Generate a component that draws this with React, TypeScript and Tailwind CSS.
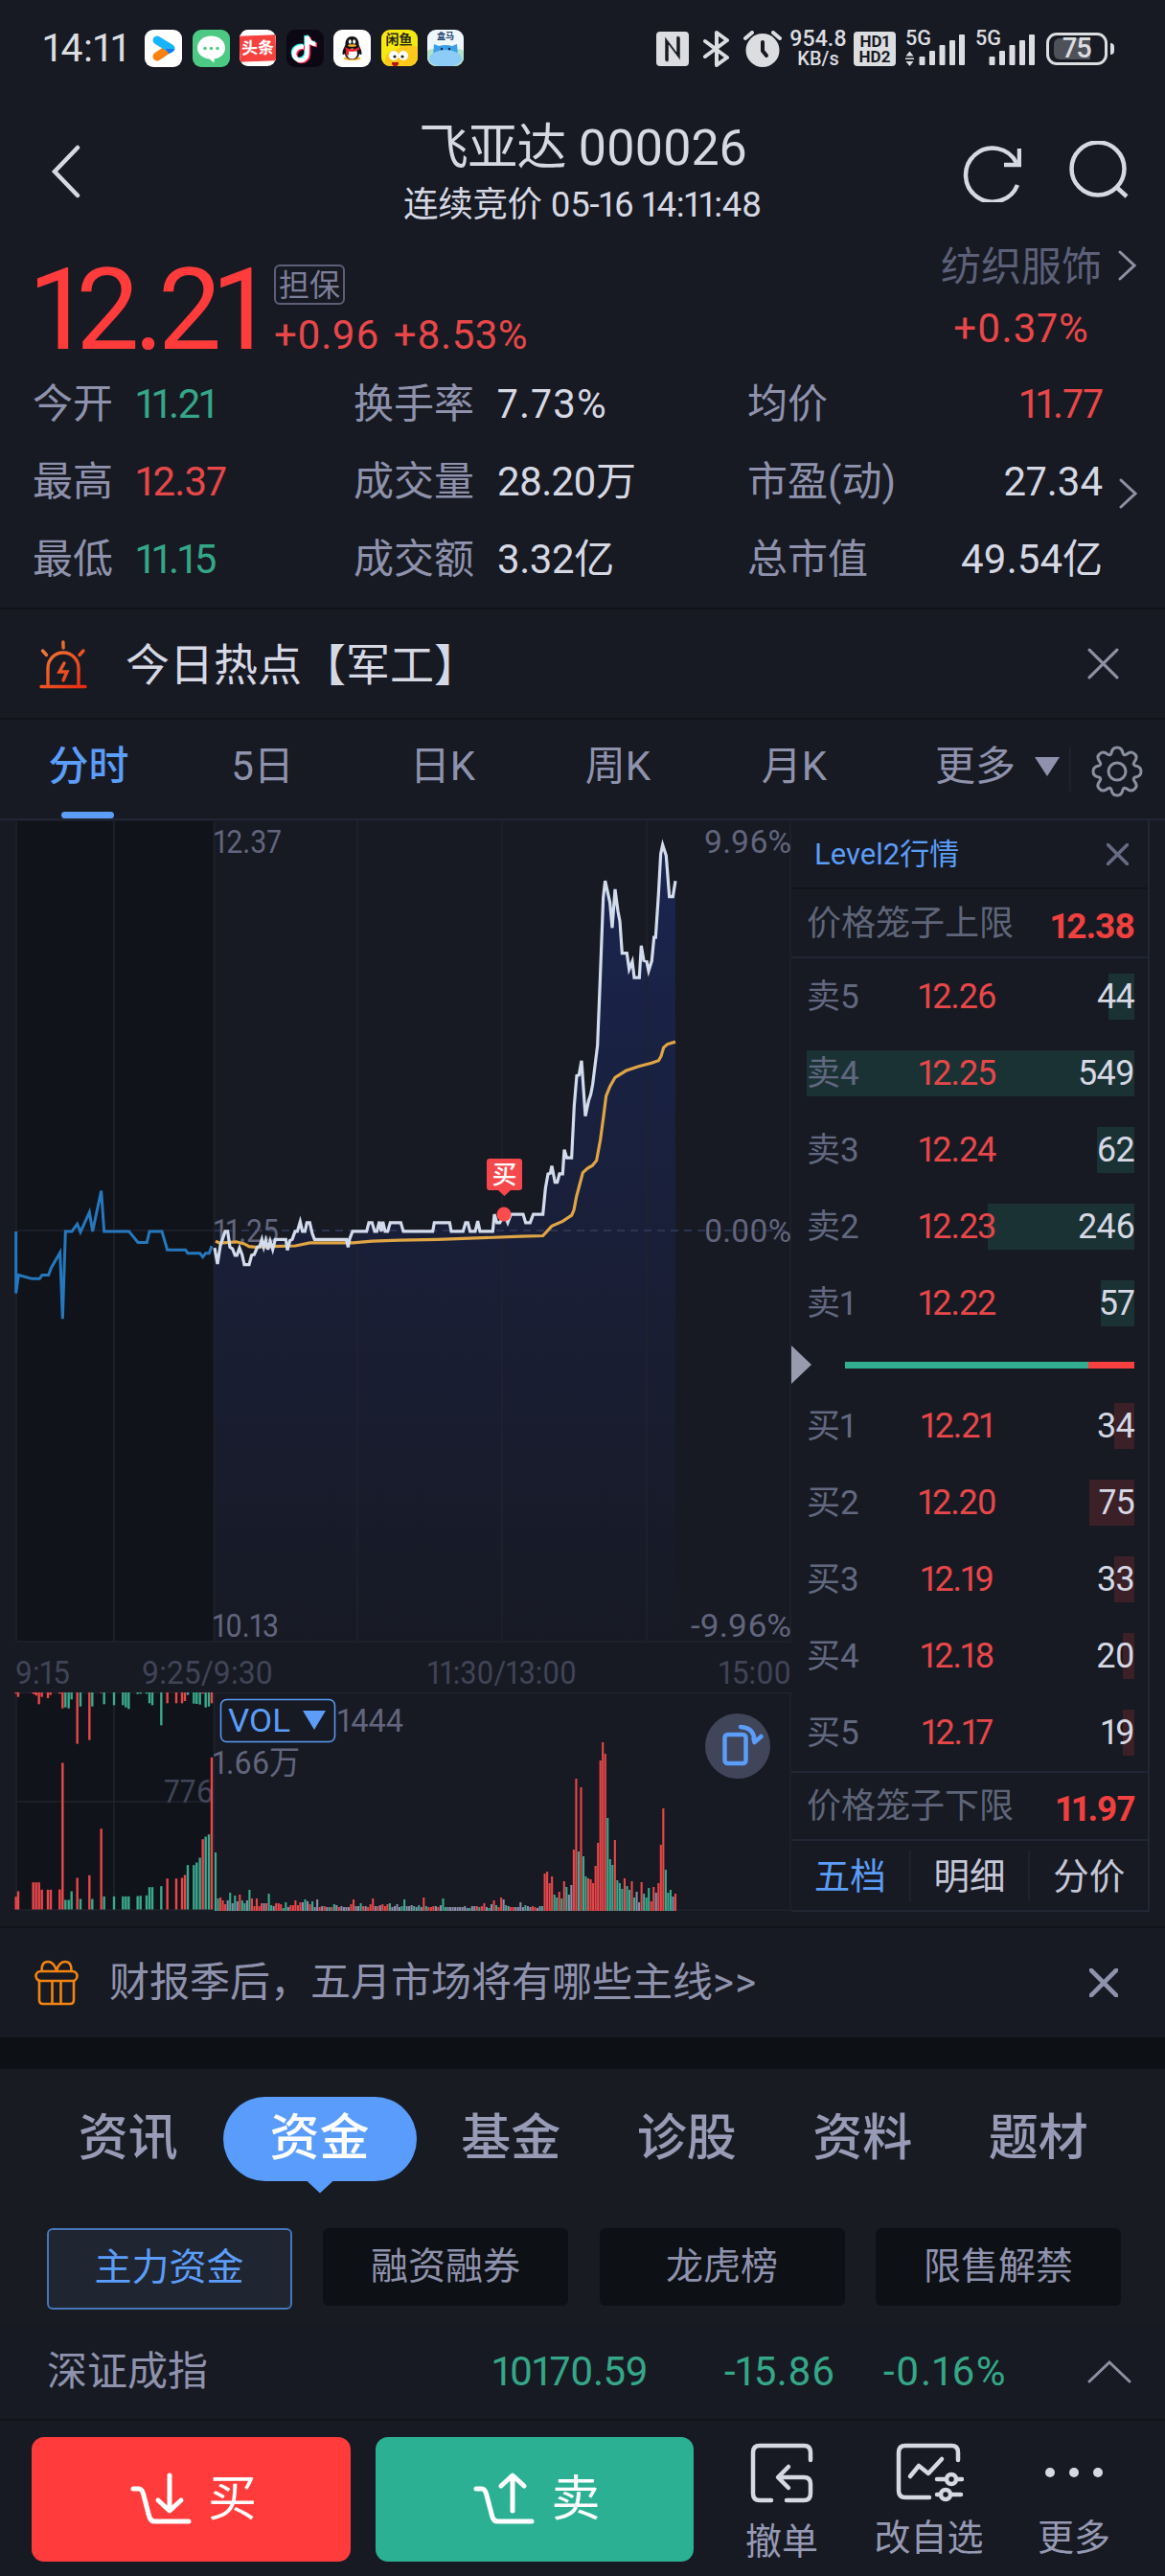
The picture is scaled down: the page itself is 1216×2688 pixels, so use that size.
import type { ReactNode } from 'react'
import clsx from 'clsx'

const UP = '#e8474a'
const DOWN = '#3aa98c'
const FLAT = '#8a8da6'

/* ---------- data ---------- */

interface Quote {
  label: string
  value: string
  tone: string
}

const quoteColumns: { className: string; labelClass: string; items: Quote[] }[] = [
  {
    className: 'w-[335px]',
    labelClass: 'w-[108px]',
    items: [
      { label: '今开', value: '11.21', tone: 'text-[#35a788] tracking-[-0.03em]' },
      { label: '最高', value: '12.37', tone: 'text-[#e8474a] tracking-[-0.02em]' },
      { label: '最低', value: '11.15', tone: 'text-[#35a788] tracking-[-0.03em]' }
    ]
  },
  {
    className: 'w-[411px]',
    labelClass: 'w-[150px]',
    items: [
      { label: '换手率', value: '7.73%', tone: 'text-[#d6d8e4] tracking-[0.03em]' },
      { label: '成交量', value: '28.20万', tone: 'text-[#d6d8e4] tracking-[-0.02em]' },
      { label: '成交额', value: '3.32亿', tone: 'text-[#d6d8e4] tracking-[-0.01em]' }
    ]
  },
  {
    className: 'w-[371px]',
    labelClass: 'flex-1',
    items: [
      { label: '均价', value: '11.77', tone: 'text-[#e8474a] tracking-[-0.02em]' },
      { label: '市盈(动)', value: '27.34', tone: 'text-[#d6d8e4]' },
      { label: '总市值', value: '49.54亿', tone: 'text-[#d6d8e4]' }
    ]
  }
]

interface Level {
  label: string
  price: string
  volume: number
}

const asks: Level[] = [
  { label: '卖5', price: '12.26', volume: 44 },
  { label: '卖4', price: '12.25', volume: 549 },
  { label: '卖3', price: '12.24', volume: 62 },
  { label: '卖2', price: '12.23', volume: 246 },
  { label: '卖1', price: '12.22', volume: 57 }
]

const bids: Level[] = [
  { label: '买1', price: '12.21', volume: 34 },
  { label: '买2', price: '12.20', volume: 75 },
  { label: '买3', price: '12.19', volume: 33 },
  { label: '买4', price: '12.18', volume: 20 },
  { label: '买5', price: '12.17', volume: 19 }
]

const MAX_VOLUME = 549

// Price series, on a grid of 1/3 px horizontally and 0.3507 px vertically
const auctionLine =
  '50,1243 50,1427 58,1373 100,1384 124,1384 132,1373 152,1373 160,1352 188,1306 196,1503 205,1243 225,1243 242,1221 252,1245 280,1186 290,1243 317,1122 326,1243 404,1243 432,1276 460,1276 468,1243 507,1243 524,1298 581,1298 588,1308 626,1308 635,1319 644,1308 655,1308 663,1287'

const priceLine =
  '672,1292 681,1340 690,1285 705,1243 713,1243 720,1290 728,1295 736,1314 742,1314 750,1292 758,1312 765,1342 780,1342 788,1314 796,1312 806,1290 813,1288 820,1267 826,1290 832,1270 839,1297 846,1272 854,1297 862,1267 895,1267 900,1299 908,1270 915,1267 924,1243 931,1243 940,1214 947,1243 955,1243 961,1217 970,1217 978,1250 985,1267 1085,1267 1090,1290 1095,1265 1104,1243 1148,1243 1155,1217 1165,1217 1173,1243 1180,1243 1188,1214 1194,1243 1199,1214 1206,1243 1214,1243 1222,1217 1255,1217 1263,1243 1355,1243 1360,1217 1408,1217 1413,1243 1450,1243 1458,1217 1465,1217 1472,1243 1488,1243 1496,1212 1503,1243 1543,1243 1548,1192 1556,1217 1565,1217 1580,1192 1590,1217 1600,1192 1638,1192 1646,1217 1660,1217 1670,1192 1700,1192 1708,1115 1716,1072 1723,1070 1728,1048 1738,1097 1745,1097 1752,1072 1762,1072 1767,1000 1775,1024 1790,1024 1798,870 1806,780 1813,778 1821,735 1833,900 1843,855 1850,835 1856,805 1871,690 1879,500 1889,250 1895,200 1910,265 1917,340 1926,225 1935,290 1941,320 1948,415 1963,415 1970,463 1980,440 1986,488 2002,488 2008,393 2016,437 2025,440 2031,468 2041,438 2048,368 2053,368 2062,240 2069,120 2075,93 2086,125 2096,247 2107,247 2115,200'

const averageLine =
  '675,1272 688,1278 740,1274 765,1280 780,1288 800,1290 850,1288 925,1286 970,1277 1105,1277 1165,1272 1250,1269 1370,1267 1490,1263 1630,1258 1700,1256 1728,1227 1762,1213 1790,1195 1797,1180 1805,1140 1825,1068 1840,1055 1855,1047 1868,1032 1880,970 1890,900 1898,840 1910,812 1926,785 1960,765 2000,752 2040,742 2062,735 2070,722 2078,696 2090,686 2115,679'

// Unmatched auction volume, hanging from the top: "x colour height" in thirds of a pixel
const auctionTop =
  '50r4 57r14 104r4 109r6 114r10 122r37 131r14 150r18 158r8 187r4 196r50 205g47 215g50 224g22 242r161 252g44 280r149 289g44 317r2 326g37 357g40 385g40 394g47 403g52 431g5 440g4 459g4 468g34 477g40 505g103 524r34 552r34 570r34 579r27 588g8 607g35 616g36 626g38 635r4 644g47 654g44 663r34'

const auctionBottom =
  '50r40 57r57 104r85 113r85 122r85 131r62 150r62 159r62 187r63 196r459 205g30 215g30 224g57 242r99 252g33 280r107 289g33 317r253 326g41 357g41 385g41 394g41 403g41 431g42 440g43 459g44 468g70 477g70 505g73 524r97 552r97 570r99 579r108 588g139 607g139 616g147 626g162 635r220 644g228 654g235 663r476'

// One minute bars: colour + height in px
const minuteBars =
  'g61 g13 r14 r11 r7 w11 g19 w8 g16 w10 r17 g11 g8 w11 g22 r13 r5 r13 r5 r8 w8 r8 g18 g6 w5 r8 r8 r7 g3 g9 w4 r6 r6 r11 r6 r9 w9 g12 w10 r7 g10 w4 w12 r4 w5 r5 w4 g4 r4 g7 w6 r4 w5 w4 w4 w4 r7 r12 w5 w5 g8 r5 w5 r4 r7 r13 w5 r5 w6 r7 r5 r7 g8 w4 w5 w7 w4 g5 g12 w5 w5 w6 g5 w4 g6 w4 r14 g5 r4 r4 r5 w5 r4 w6 g13 g4 w4 w4 w4 w4 w4 w4 w4 w5 w3 g3 w5 w5 r5 g4 r5 r8 w4 g3 w7 r11 g6 r4 r14 w12 g6 w5 r4 r4 w4 w4 w9 w4 g6 w5 w4 r5 r4 w3 w5 g5 r39 r41 r29 r36 g17 g14 r20 g13 r31 g25 w17 w27 r64 r138 g62 r129 g57 g36 r34 r33 r29 r47 r71 r157 r176 r164 g97 g54 g48 r74 g32 g29 g23 r34 g26 g22 r31 g14 w20 w9 r30 g18 g14 g24 r10 r25 w19 r29 r69 r107 g43 g19 g22 w15 r18'

const barColors: Record<string, string> = { r: UP, g: DOWN, w: FLAT }

/* ---------- small pieces ---------- */

function Chevron({ className }: { className?: string }) {
  return (
    <svg viewBox="0 0 19 32" className={clsx('h-8 w-[19px]', className)} fill="none" stroke="#8f91a2" strokeWidth="3" strokeLinecap="round">
      <path d="M2 2l15 14L2 30" />
    </svg>
  )
}

function CloseIcon({ className, strokeWidth = 3 }: { className: string; strokeWidth?: number }) {
  return (
    <svg viewBox="0 0 32 32" className={className} fill="none" stroke="currentColor" strokeWidth={strokeWidth} strokeLinecap="round">
      <path d="M2 2l28 28M30 2L2 30" />
    </svg>
  )
}

function Signal({ data }: { data?: boolean }) {
  return (
    <svg viewBox="0 0 62 42" className="h-[42px] w-[62px] overflow-visible" fill="#dcdde0">
      <text x="0" y="17" fontSize="22" fontWeight="500" fontFamily="Roboto, sans-serif" textLength="27" lengthAdjust="spacingAndGlyphs">
        5G
      </text>
      {data && <path d="M0.500 28.500l4-5 4 5zM0.500 34l4 5 4-5zM0 30.500h9v1.500h-9z" />}
      <rect x="14.500" y="29" width="6" height="9" rx="1" />
      <rect x="25" y="23" width="6" height="15" rx="1" />
      <rect x="35.500" y="17" width="6" height="21" rx="1" />
      <rect x="46" y="12" width="6" height="26" rx="1" />
      <rect x="56" y="6" width="6" height="32" rx="1" />
    </svg>
  )
}

function AppIcons() {
  return (
    <div className="flex gap-[10.500px]">
      <svg viewBox="0 0 39 39" className="size-[39px]">
        <rect width="39" height="39" rx="9" fill="#fff" />
        <path d="M13 28l12-8" stroke="#fb8110" strokeWidth="9" strokeLinecap="round" />
        <path d="M13 11l14 8.500" stroke="#18b4fb" strokeWidth="9" strokeLinecap="round" />
        <path d="M22 20h9c-1 3-3 4-6 5z" fill="#1277f0" />
      </svg>
      <svg viewBox="0 0 39 39" className="size-[39px]">
        <rect width="39" height="39" rx="9" fill="#4cc982" />
        <path d="M19.500 6.500c8.500 0 14.500 5.500 14.500 12.500 0 6-4.500 10.500-11.500 11.500v4l-5-4C10 29.500 5 25 5 19 5 12 11 6.500 19.500 6.500z" fill="#fff" />
        <g fill="#4cc982">
          <circle cx="13" cy="19.500" r="1.700" />
          <circle cx="19.500" cy="19.500" r="1.700" />
          <circle cx="26" cy="19.500" r="1.700" />
        </g>
      </svg>
      <div className="flex size-[38px] items-center justify-center overflow-hidden rounded-[9px] bg-white">
        <span className="flex h-[27px] w-full shrink-0 -rotate-2 items-center justify-center bg-[#f5423f] text-[17px] leading-none font-bold text-white">
          头条
        </span>
      </div>
      <svg viewBox="0 0 39 39" className="size-[39px]">
        <rect width="39" height="39" rx="9" fill="#0b0813" />
        <g fill="none" strokeWidth="4.500">
          <path d="M18 18c-6-1-10 3-10 7s3 7 6.500 7 7-3 7-7V7c1 4 4 8 9 8" stroke="#25f4ee" transform="translate(-1 -1)" />
          <path d="M18 18c-6-1-10 3-10 7s3 7 6.500 7 7-3 7-7V7c1 4 4 8 9 8" stroke="#fe2c55" transform="translate(1.500 1)" />
          <path d="M18 18c-6-1-10 3-10 7s3 7 6.500 7 7-3 7-7V7c1 4 4 8 9 8" stroke="#fff" />
        </g>
      </svg>
      <svg viewBox="0 0 39 39" className="size-[39px]">
        <rect width="39" height="39" rx="9" fill="#fff" />
        <ellipse cx="19.500" cy="30" rx="9" ry="2" fill="#f6b22c" />
        <path d="M19.500 7c4.500 0 7 3.500 7 8 0 2 3 5.500 3 9.500 0 2-1 2-2.500.5-.5 4-3.500 6-7.500 6s-7-2-7.500-6C10.500 26.500 9.500 26.500 9.500 24.500c0-4 3-7.500 3-9.500 0-4.500 2.500-8 7-8z" fill="#111" />
        <ellipse cx="19.500" cy="25" rx="5.500" ry="5.500" fill="#fff" />
        <path d="M12 18c5 3 10 3 15 0v3c-5 2-8 2-11 1.500v4h-3v-5z" fill="#e8202a" />
        <ellipse cx="17.300" cy="12.500" rx="1.500" ry="2.200" fill="#fff" />
        <ellipse cx="21.700" cy="12.500" rx="1.500" ry="2.200" fill="#fff" />
        <ellipse cx="19.500" cy="16.500" rx="4.500" ry="1.300" fill="#f6b22c" />
      </svg>
      <div className="relative flex size-[38px] justify-center overflow-hidden rounded-[9px] bg-[#f6e813]">
        <span className="pt-[3px] text-[14px] leading-none font-bold text-[#2b2a10]">闲鱼</span>
        <svg viewBox="0 0 38 38" className="absolute inset-0 size-[38px]">
          <path d="M4 38c-2-10 3-17 12-17 5-6 17-4 22-3v20z" fill="#fdc91b" />
          <circle cx="13" cy="27" r="5" fill="#fff" />
          <circle cx="23" cy="27" r="5" fill="#fff" />
          <circle cx="14" cy="28" r="1.600" fill="#222" />
          <circle cx="22" cy="28" r="1.600" fill="#222" />
          <path d="M11 34h7c0 3-1 4-3.500 4S11 37 11 34z" fill="#b3121d" />
        </svg>
      </div>
      <div className="relative flex size-[38px] justify-center overflow-hidden rounded-[9px] bg-[#eef7fb]">
        <span className="pt-[3px] text-[9px] leading-none font-bold text-[#20406b]">盒马</span>
        <svg viewBox="0 0 38 38" className="absolute inset-0 size-[38px]">
          <path d="M0 22q6-4 10 0v16H0zM38 22q-6-4-10 0v16h10z" fill="#b4e3c9" />
          <path d="M7 15l5 2q7-2 14 0l5-2 1 12H6z" fill="#3c9fe8" />
          <ellipse cx="19" cy="30" rx="17" ry="9" fill="#8cccf6" />
          <circle cx="15" cy="20" r="1.200" fill="#123" />
          <circle cx="23" cy="20" r="1.200" fill="#123" />
        </svg>
      </div>
    </div>
  )
}

function StatusBar() {
  return (
    <div className="flex h-[100px] items-center pt-[1px] pl-[45px] text-[#dcdde0]">
      <span className="w-[106px] text-[41px] leading-none tracking-[0.015em]">14:11</span>
      <AppIcons />
      <div className="ml-auto flex items-center pr-[53px]">
        <svg viewBox="0 0 34 36" className="h-9 w-[34px]">
          <rect width="34" height="36" rx="4" fill="#dcdde0" />
          <path d="M9 5v25q3 3 4 0V14l12 16V6q-3-3-4 0v15z" fill="#171a22" stroke="#dcdde0" strokeWidth="0.500" />
        </svg>
        <svg viewBox="0 0 30 38" className="ml-[14px] h-[38px] w-[30px]" fill="none" stroke="#dcdde0" strokeWidth="4" strokeLinejoin="round" strokeLinecap="round">
          <path d="M3 11l23 17-11 8V2l11 8L3 27" />
        </svg>
        <svg viewBox="0 0 40 38" className="ml-[13px] h-[38px] w-10" stroke="#dcdde0" strokeLinecap="round">
          <circle cx="20" cy="20.500" r="17.500" fill="#dcdde0" stroke="none" />
          <path d="M2 8l7-6M38 8l-7-6" strokeWidth="4" />
          <path d="M20 12v9l4 5" fill="none" stroke="#171a22" strokeWidth="4" />
        </svg>
        <div className="ml-2 flex w-[60px] flex-col items-center text-[23px] leading-[20px] font-medium">
          <span>954.8</span>
          <span className="text-[20px]">KB/s</span>
        </div>
        <div className="ml-[7px] flex h-9 w-11 flex-col items-center justify-center rounded-[4px] bg-[#dcdde0] text-[17px] leading-4 font-bold text-[#171a22]">
          <span>HD1</span>
          <span>HD2</span>
        </div>
        <div className="ml-[10px] flex gap-[11px]">
          <Signal data />
          <Signal />
        </div>
        <div className="ml-[12px] flex h-[34px] w-16 items-center justify-center rounded-[11px] border-[3px] border-[#dcdde0]">
          <span className="flex h-[22px] w-[48px] items-center rounded-[6px] bg-linear-to-r from-[#4f5159] from-80% to-transparent to-80% pl-[9px] text-[29px] leading-none font-medium tracking-[-0.03em]">
            75
          </span>
        </div>
        <div className="ml-[3px] h-3 w-1 rounded-r bg-[#dcdde0]" />
      </div>
    </div>
  )
}

function Header() {
  return (
    <div className="flex h-[152px] items-start px-[36px] text-[#d6d8e4]">
      <div className="flex w-[200px] pt-[51px] pl-[17px]">
        <svg viewBox="0 0 32 56" className="h-14 w-8" fill="none" stroke="currentColor" strokeWidth="4.500" strokeLinecap="round">
          <path d="M28 3L4 28l24 25" />
        </svg>
      </div>
      <div className="flex flex-1 flex-col items-center pt-[28px]">
        <h1 className="text-[52px] leading-[54px] tracking-[-0.013em]">飞亚达 000026</h1>
        <p className="mt-[13px] text-[36.500px] leading-[38px] tracking-[-0.009em]">连续竞价 05-16 14:11:48</p>
      </div>
      <div className="flex w-[200px] justify-end gap-[50px] pt-[47px] pr-[2px]">
        <svg viewBox="0 0 62 64" className="h-16 w-[62px]" fill="none" stroke="currentColor" strokeWidth="4.500">
          <path d="M58 46A28 28 0 1 1 57 23" />
          <path d="M60 8v17H44" />
        </svg>
        <svg viewBox="0 0 62 64" className="h-16 w-[62px]" fill="none" stroke="currentColor" strokeWidth="4.500">
          <circle cx="30" cy="29" r="27.500" />
          <path d="M49 48l11 10" />
        </svg>
      </div>
    </div>
  )
}

function PriceSummary() {
  return (
    <div className="flex h-[128px] items-start pl-[34px]">
      <div className="w-[252px] pt-[17px] text-[118px] leading-[110px] tracking-[-0.050em] text-[#ff3b3b]">12.21</div>
      <div className="pt-[24px]">
        <div className="flex h-[42px] w-[74px] items-center justify-center rounded-[6px] border-2 border-[#5d5f78] pt-px text-[32px] leading-none text-[#7d7f99]">
          担保
        </div>
        <div className="mt-[11px] text-[42px] leading-[42px] tracking-[0.012em] text-[#e8474a] [word-spacing:4px]">+0.96 +8.53%</div>
      </div>
      <div className="ml-auto flex items-start">
        <div className="flex w-[170px] flex-col items-center pt-[6px] text-[42px] leading-[42px]">
          <span className="text-[#5c6079]">纺织服饰</span>
          <span className="mt-[22px] tracking-[0.025em] text-[#e8474a]">+0.37%</span>
        </div>
        <Chevron className="mt-[9px] mr-[30px] ml-4" />
      </div>
    </div>
  )
}

function QuoteGrid() {
  return (
    <div className="flex h-[256px] border-b-2 border-[#10131a] pl-[34px] text-[42px] leading-none">
      {quoteColumns.map((col) => (
        <div key={col.className} className={clsx('flex flex-col pt-[1.500px]', col.className)}>
          {col.items.map((q) => (
            <div key={q.label} className="flex h-[81px] items-center">
              <span className={clsx('text-[#8f92ad]', col.labelClass)}>{q.label}</span>
              <span className={q.tone}>{q.value}</span>
            </div>
          ))}
        </div>
      ))}
      <Chevron className="mt-[119px] ml-[17px]" />
    </div>
  )
}

function HotTopic() {
  return (
    <div className="flex h-[115px] items-center border-b-2 border-[#10131a] pr-12 pl-[41px]">
      <svg viewBox="0 0 50 52" className="h-[52px] w-[50px]" fill="none" stroke="url(#alarm)" strokeWidth="3.400" strokeLinecap="round">
        <defs>
          <linearGradient id="alarm" gradientUnits="userSpaceOnUse" x1="0" y1="0" x2="50" y2="52">
            <stop offset="0" stopColor="#f08a3c" />
            <stop offset="1" stopColor="#e9260f" />
          </linearGradient>
        </defs>
        <path d="M2 49.500h46M9 49V30a16 16 0 0 1 32 0v19M24.900 3l.2 6M3.500 12l4 4.500M46 12l-4 4.500M26 25l-5 9h8l-4 9" />
      </svg>
      <span className="ml-[40px] pt-[2px] text-[46px] leading-none text-[#d6d8e4]">今日热点【军工】</span>
      <CloseIcon className="ml-auto size-[33px] text-[#8f91a2]" />
    </div>
  )
}

function PeriodTabs() {
  return (
    <div className="flex h-[105px] border-b-2 border-[#222533] text-[42px] leading-none text-[#8f92ad]">
      <div className="relative flex w-[185px] items-center justify-center pb-[6px] font-medium text-[#5b9df8]">
        分时
        <span className="absolute bottom-0 left-16 h-[7px] w-[55px] rounded bg-[#5b9df8]" />
      </div>
      <div className="flex w-[178px] items-center justify-center pb-[6px]">5日</div>
      <div className="flex w-[198px] items-center justify-center pb-[6px]">日K</div>
      <div className="flex w-[168px] items-center justify-center pb-[6px]">周K</div>
      <div className="flex w-[200px] items-center justify-center pb-[6px]">月K</div>
      <div className="flex flex-1 items-center pb-[6px] pl-[47px]">
        更多
        <svg viewBox="0 0 26 20" className="ml-[20px] h-5 w-[26px]" fill="#8f92ad">
          <path d="M0 0h26L13 20z" />
        </svg>
      </div>
      <div className="mt-[29px] mb-[28px] w-[100px] border-l-2 border-[#1f222d] pl-[21px]">
        <svg viewBox="0 0 54 54" className="-mt-[2px] size-[54px]" fill="none" stroke="#8b90a0" strokeWidth="3" strokeLinejoin="round">
          <path d="M21 8Q22 2 27 2Q32 2 33 8Q34 11 37 9Q42 5 45.500 9Q49 12 45 17Q43 20 46 21Q52 22 52 27Q52 32 46 33Q43 34 45 37Q49 42 45.500 45Q42 49 37 45Q34 43 33 46Q32 52 27 52Q22 52 21 46Q20 43 17 45Q12 49 8.500 45Q5 42 9 37Q11 34 8 33Q2 32 2 27Q2 22 8 21Q11 20 9 17Q5 12 8.500 9Q12 5 17 9Q20 11 21 8z" />
          <circle cx="27" cy="27" r="9" />
        </svg>
      </div>
    </div>
  )
}

/* ---------- chart ---------- */

function ChartText({ x, y, width, fill = '#62657d', children }: { x: number; y: number; width: number; fill?: string; children: ReactNode }) {
  return (
    <text x={x} y={y} fill={fill} fontSize="34" textLength={width} lengthAdjust="spacingAndGlyphs">
      {children}
    </text>
  )
}

function parseBars(source: string) {
  return source.split(' ').map((s) => {
    const at = s.search(/[rgw]/)
    return { x: Number(s.slice(0, at)), color: barColors[s[at]], h: Number(s.slice(at + 1)) }
  })
}

function MinuteChart() {
  return (
    <svg viewBox="0 857 826 1139" className="h-[1139px] w-[826px] shrink-0 overflow-visible" fontFamily='Roboto, "Noto Sans CJK SC", sans-serif'>
      <defs>
        <linearGradient id="area" gradientUnits="userSpaceOnUse" x1="0" y1="60" x2="0" y2="2460">
          <stop offset="0" stopColor="#1a2550" />
          <stop offset="0.500" stopColor="#191f38" />
          <stop offset="1" stopColor="#171a24" />
        </linearGradient>
      </defs>
      <rect x="17" y="858" width="206" height="856" fill="#10131a" />
      <rect x="17" y="1767" width="206" height="228" fill="#10131a" />

      <g transform="translate(0 850) scale(0.33333 0.3507)">
        <polygon points={`672,2462 ${priceLine} 2115,2462`} fill="url(#area)" />
      </g>

      {/* grid */}
      <g stroke="#20232e" strokeWidth="1.500">
        <path d="M17 858V1714M119 858V1714M223.500 858V1714M373 858V1714M524 858V1714M675 858V1714M825 858V1714" />
        <path d="M17 1714H826M17 1285H223M223 1767.500H826M17 1767.500H223M825 1767V1994M17 1994H826" />
        <path d="M17 1767V1994M119 1767V1994M223.500 1767V1994M17 1881H223" />
      </g>
      <path d="M224 1285H825" stroke="#2b3452" strokeWidth="2" strokeDasharray="8 6" />

      <g>
        <ChartText x={223} y={891} width={71}>12.37</ChartText>
        <ChartText x={223} y={1297} width={68}>11.25</ChartText>
        <ChartText x={222} y={1709} width={69}>10.13</ChartText>
        <ChartText x={735} y={891} width={91}>9.96%</ChartText>
        <ChartText x={735} y={1297} width={91}>0.00%</ChartText>
        <ChartText x={721} y={1709} width={105}>-9.96%</ChartText>
      </g>

      <g transform="translate(0 850) scale(0.33333 0.3507)" fill="none">
        <polyline points={auctionLine} stroke="#2678be" strokeWidth="3" vectorEffect="non-scaling-stroke" />
        <polyline points={averageLine} stroke="#e0a545" strokeWidth="3.200" vectorEffect="non-scaling-stroke" />
        <polyline points={priceLine} stroke="#d3dcec" strokeWidth="3.200" vectorEffect="non-scaling-stroke" />
      </g>

      {/* trade marker */}
      <path d="M511 1210h31q3 0 3 3v27q0 3-3 3h-9l-6.500 6-6.500-6h-9q-3 0-3-3v-27q0-3 3-3z" fill="#f5484c" />
      <text x="513.500" y="1236" fontSize="26" fill="#fff" fontWeight="500">
        买
      </text>
      <circle cx="526" cy="1268" r="7.500" fill="#ff4a4e" />

      <g>
        <ChartText x={16} y={1758} width={57} fill="#414457">9:15</ChartText>
        <ChartText x={148} y={1758} width={137} fill="#414457">9:25/9:30</ChartText>
        <ChartText x={446} y={1758} width={156} fill="#414457">11:30/13:00</ChartText>
        <ChartText x={750} y={1758} width={76} fill="#414457">15:00</ChartText>
      </g>

      {/* volume */}
      <ChartText x={171} y={1882} width={52} fill="#414457">776</ChartText>
      {parseBars(auctionTop).map((b) => (
        <rect key={`t${b.x}`} x={b.x / 3 - 1.200} y={1767} width={2.400} height={b.h / 3} fill={b.color} />
      ))}
      {parseBars(auctionBottom).map((b) => (
        <rect key={`b${b.x}`} x={b.x / 3 - 1.200} y={1993.500 - b.h / 3} width={2.400} height={b.h / 3} fill={b.color} />
      ))}
      {parseBars(minuteBars).map((b, i) => (
        <rect key={i} x={224 + i * 2.526} y={1995 - b.h} width={2.100} height={b.h} fill={b.color} />
      ))}

      <rect x="230.500" y="1774.500" width="119" height="44" rx="6" fill="#171a22" stroke="#5b9df8" strokeWidth="1.500" />
      <text x="238" y="1808" fontSize="34" fill="#5b9df8" textLength="65" lengthAdjust="spacingAndGlyphs">
        VOL
      </text>
      <path d="M316 1786h24l-12 20z" fill="#5b9df8" />
      <ChartText x={352} y={1808} width={69}>1444</ChartText>
      <ChartText x={222} y={1852} width={91}>1.66万</ChartText>

      {/* rotate to landscape */}
      <circle cx="770" cy="1823" r="34" fill="#414559" />
      <g fill="none" stroke="#5b9df8" strokeWidth="4.500" strokeLinecap="round" strokeLinejoin="round">
        <rect x="756.500" y="1811" width="22" height="30" rx="3" />
        <path d="M773 1803q15 1 14.500 16M787.500 1819l-1-4M787.500 1819l7-6" />
      </g>
    </svg>
  )
}

/* ---------- order book ---------- */

function LevelRow({ level, side }: { level: Level; side: 'ask' | 'bid' }) {
  return (
    <div className="relative mr-[14px] ml-4 flex h-20 items-center text-[36px] leading-none">
      <div
        className={clsx('absolute top-4 right-0 h-12', side === 'ask' ? 'bg-[#1b3235]' : 'bg-[#3b2028]')}
        style={{ width: `${(level.volume / MAX_VOLUME) * 100}%` }}
      />
      <span className="relative w-[109px] text-[35px] text-[#626880]">{level.label}</span>
      <span className="relative w-[96px] text-center tracking-[-0.030em] text-[#e8474a]">{level.price}</span>
      <span className="relative flex-1 text-right tracking-[-0.020em] text-[#d6d8e4]">{level.volume}</span>
    </div>
  )
}

function OrderBook() {
  return (
    <div className="flex w-[374px] flex-col border-r-2 border-b-2 border-[#222533]">
      <div className="flex h-[72px] items-center border-b-2 border-[#10131a] pt-px pr-5 pl-[24px] text-[31px] leading-none text-[#5b9df8]">
        Level2行情
        <CloseIcon className="ml-auto size-[23px] text-[#666a83]" strokeWidth={5} />
      </div>
      <div className="flex h-[72px] items-center border-b-2 border-[#222533] pt-px pr-[14px] pl-4 text-[36px] leading-none">
        <span className="text-[#5f6579]">价格笼子上限</span>
        <span className="ml-auto pt-[6px] text-[37px] font-bold tracking-[-0.030em] text-[#f0403f]">12.38</span>
      </div>
      {asks.map((l) => (
        <LevelRow key={l.label} level={l} side="ask" />
      ))}
      <div className="flex h-12 items-center">
        <svg viewBox="0 0 21 40" className="h-10 w-[21px]" fill="#979bad">
          <path d="M0 0l21 20L0 40z" />
        </svg>
        <div className="ml-[35px] h-[7px] w-[254px] bg-[#32ad92]" />
        <div className="h-[7px] w-[48px] bg-[#f7403f]" />
      </div>
      {bids.map((l) => (
        <LevelRow key={l.label} level={l} side="bid" />
      ))}
      <div className="flex h-[73px] items-center border-y-2 border-[#222533] pr-[14px] pl-4 text-[36px] leading-none">
        <span className="text-[#5f6579]">价格笼子下限</span>
        <span className="ml-auto pt-[5px] text-[37px] font-bold tracking-[-0.030em] text-[#f0403f]">11.97</span>
      </div>
      <div className="flex flex-1 items-center text-[37.500px] leading-none text-[#c5c7d9]">
        <span className="flex h-[53px] flex-1 items-center justify-center pt-[3px] text-[#5b9df8]">五档</span>
        <span className="flex h-[53px] flex-1 items-center justify-center border-x-2 border-[#1f222d] pt-[3px]">明细</span>
        <span className="flex h-[53px] flex-1 items-center justify-center pt-[3px]">分价</span>
      </div>
    </div>
  )
}

/* ---------- lower part ---------- */

function Notice() {
  return (
    <div className="mt-[15px] flex h-[116px] items-center border-t-2 border-[#10131a] pr-[49px] pl-9">
      <svg viewBox="0 0 46 48" className="h-12 w-[46px]" fill="none" stroke="#f28414" strokeWidth="2.600" strokeLinejoin="round">
        <rect x="1.500" y="12" width="43" height="10" rx="5" />
        <path d="M5 22v20q0 4 4 4h28q4 0 4-4V22M18.500 22v24M27.500 22v24" />
        <path d="M7.500 12Q7 2 14 2q6 0 9 9 3-9 9-9 7 0 6.500 10" />
      </svg>
      <span className="ml-[32px] text-[42px] leading-none text-[#8f92ad]">
        财报季后，五月市场将有哪些主线<span className="tracking-[0.030em]">&gt;&gt;</span>
      </span>
      <CloseIcon className="ml-auto size-[30px] text-[#8f92ad]" strokeWidth={5} />
    </div>
  )
}

const sections = ['资讯', '资金', '基金', '诊股', '资料', '题材']
const subSections = ['主力资金', '融资融券', '龙虎榜', '限售解禁']

function Sections() {
  return (
    <div className="h-[300px] border-t-[33px] border-[#0d1014] bg-[#181b22]">
      <div className="flex pt-[29px] pl-[42px] text-[52px] leading-none font-medium text-[#989bb5]">
        {sections.map((name) =>
          name === '资金' ? (
            <div key={name} className="relative mx-[7px] flex h-[88px] w-[202px] items-center justify-center rounded-full bg-[#599cfb] text-white">
              {name}
              <svg viewBox="0 0 28 13" className="absolute top-[87px] left-[87px] h-[14px] w-7" fill="#599cfb">
                <path d="M0 0h28L14 13z" />
              </svg>
            </div>
          ) : (
            <div key={name} className="flex h-[88px] w-[183.500px] items-center justify-center">
              {name}
            </div>
          )
        )}
      </div>
      <div className="mt-[49px] flex items-start gap-[32.500px] pl-[48.500px] text-[39px] leading-none">
        {subSections.map((name, i) => (
          <div
            key={name}
            className={clsx(
              'flex w-[256px] items-center justify-center rounded-[6px]',
              i === 0 ? 'h-[85px] border-2 border-[#4576b8] bg-[#202532] pb-[2px] text-[#5b9df8]' : 'h-[81px] bg-[#0d1014] text-[#8f92ad]'
            )}
          >
            {name}
          </div>
        ))}
      </div>
    </div>
  )
}

function IndexBar() {
  return (
    <div className="flex h-[100px] items-center border-b-2 border-[#10131a] pl-[49px] text-[42px] leading-none text-[#35a788]">
      <span className="w-[465px] text-[#8f92ad]">深证成指</span>
      <span className="w-[242px] tracking-[-0.010em]">10170.59</span>
      <span className="w-[166px] tracking-[0.010em]">-15.86</span>
      <span className="tracking-[0.035em]">-0.16%</span>
      <svg viewBox="0 0 46 26" className="mr-[35px] ml-auto h-[26px] w-[46px]" fill="none" stroke="#8f91a2" strokeWidth="3" strokeLinecap="round">
        <path d="M2 23L23 3l21 20" />
      </svg>
    </div>
  )
}

function BottomBar() {
  return (
    <div className="flex flex-1 items-start pt-[17px] pl-[33px] text-[38px] leading-none text-[#9699b3]">
      <button className="flex h-[130px] w-[333px] items-center justify-center gap-[17px] rounded-[13px] bg-[#ff3b3b] pb-[2px] pl-[5px] text-[51px] text-white">
        <svg viewBox="0 0 64 56" className="h-14 w-16" fill="none" stroke="#fff" strokeWidth="5" strokeLinecap="round" strokeLinejoin="round">
          <path d="M3 18h6q3 0 4.500 5l6 23q1.500 6 6 6H61M41 4v36M29 30l12 11 12-11" />
        </svg>
        买
      </button>
      <button className="ml-[26px] flex h-[130px] w-[332px] items-center justify-center gap-[17px] rounded-[13px] bg-[#2bb094] pb-[2px] pl-[5px] text-[51px] text-white">
        <svg viewBox="0 0 64 56" className="h-14 w-16" fill="none" stroke="#fff" strokeWidth="5" strokeLinecap="round" strokeLinejoin="round">
          <path d="M3 18h6q3 0 4.500 5l6 23q1.500 6 6 6H61M41 41V5M29 15L41 4l12 11" />
        </svg>
        卖
      </button>
      <div className="ml-[40px] flex w-[104px] flex-col items-center pt-[5px]">
        <svg viewBox="0 0 66 64" className="h-16 w-[66px]" fill="none" stroke="#d6d8e4" strokeWidth="4.500" strokeLinecap="round" strokeLinejoin="round">
          <path d="M63 19V11q0-7-7-7H10q-7 0-7 7v43q0 7 7 7h12M38 61h18q7 0 7-7V44q0-7-7-7H30M40 26L29 37l11 11" />
        </svg>
        <span className="mt-[21px]">撤单</span>
      </div>
      <div className="ml-[29px] flex w-[145px] flex-col items-center pt-[5px]">
        <svg viewBox="0 0 72 64" className="h-16 w-[72px]" fill="none" stroke="#d6d8e4" strokeWidth="4.500" strokeLinecap="round" strokeLinejoin="round">
          <path d="M66 19V11q0-7-7-7H11q-7 0-7 7v40q0 7 7 7h25M16 36l9-11 10 8 14-15" />
          <path d="M44 39h10M64 39h6M44 55h4M60 55h9" />
          <circle cx="59" cy="39" r="5" />
          <circle cx="53" cy="55" r="5" />
        </svg>
        <span className="mt-[17px]">改自选</span>
      </div>
      <div className="ml-[29px] flex w-[100px] flex-col items-center pt-[5px]">
        <svg viewBox="0 0 62 64" className="h-16 w-[62px]" fill="#d6d8e4">
          <circle cx="6" cy="32" r="5" />
          <circle cx="31" cy="32" r="5" />
          <circle cx="56" cy="32" r="5" />
        </svg>
        <span className="mt-[17px]">更多</span>
      </div>
    </div>
  )
}

export default function App() {
  return (
    <div className="flex h-[2688px] w-[1216px] flex-col overflow-hidden bg-[#171a22] font-[Roboto,'Noto_Sans_CJK_SC',sans-serif] whitespace-nowrap [font-feature-settings:'pnum']">
      <StatusBar />
      <Header />
      <PriceSummary />
      <QuoteGrid />
      <HotTopic />
      <PeriodTabs />
      <div className="flex h-[1139px]">
        <MinuteChart />
        <OrderBook />
      </div>
      <Notice />
      <Sections />
      <IndexBar />
      <BottomBar />
    </div>
  )
}
